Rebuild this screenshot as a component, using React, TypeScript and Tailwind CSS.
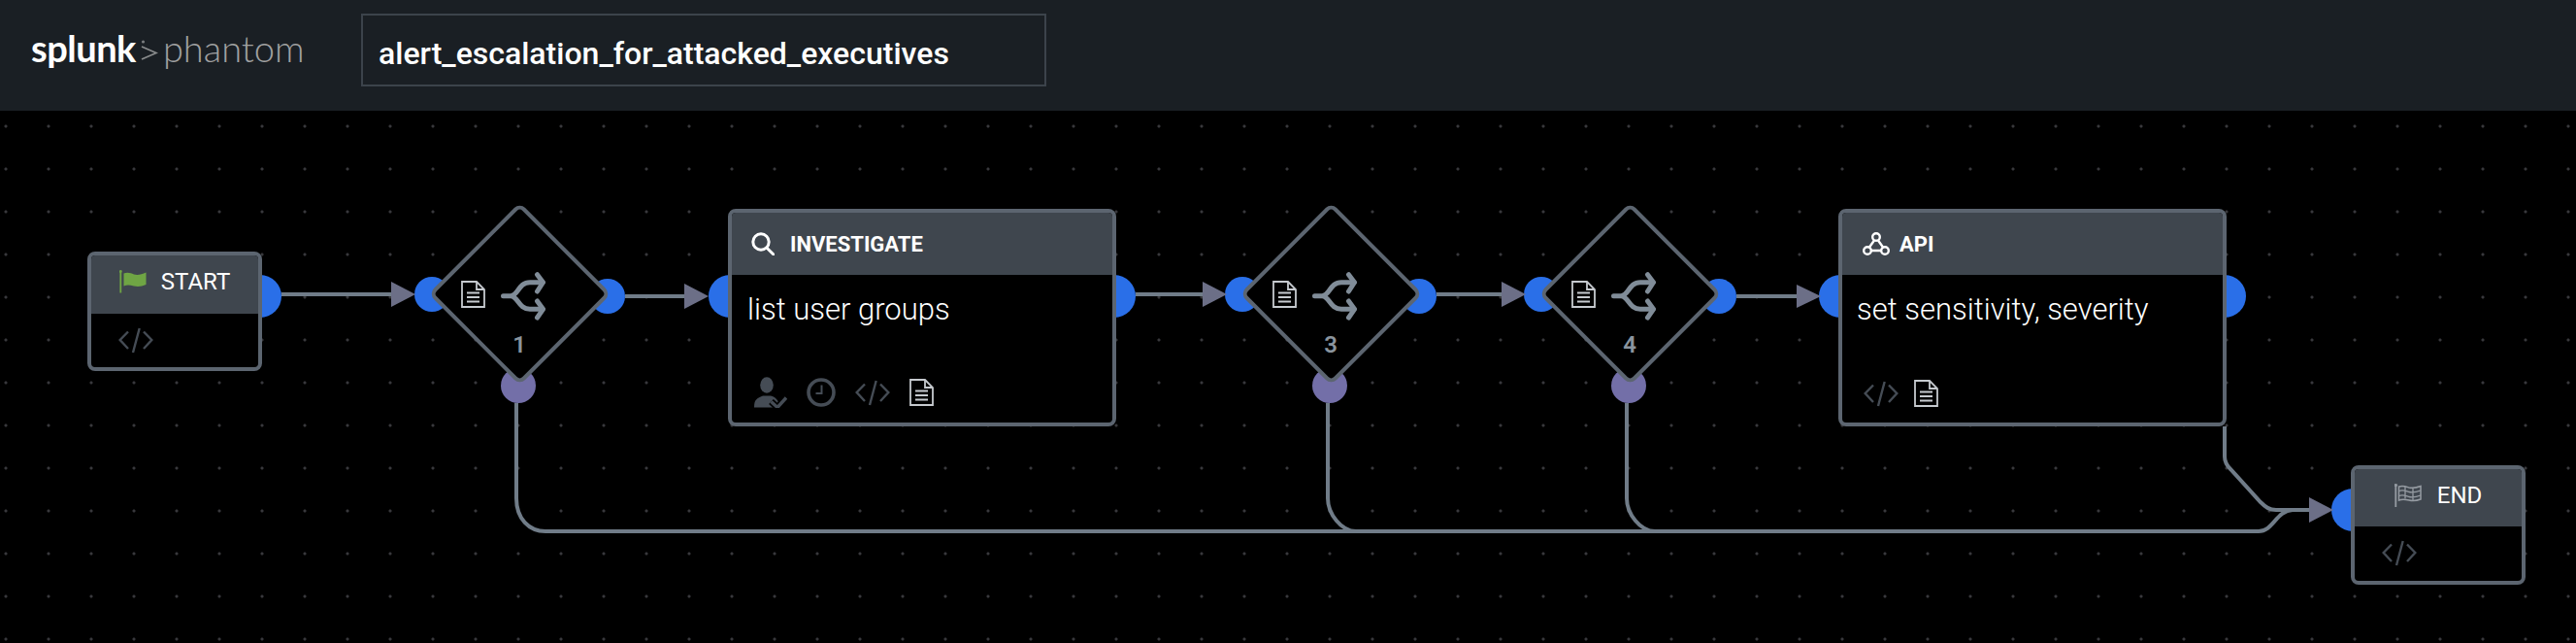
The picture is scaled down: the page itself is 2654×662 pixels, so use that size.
import type { ReactNode } from "react"

const LINE = "#707c88"
const ARROW = "#6c6f87"
const BLUE = "#2a6fe8"
const PURPLE = "#736fa8"

const bluePorts: [number, number, number][] = [
  [268, 191, 22],
  [445, 189, 18],
  [626, 191, 18],
  [752, 191, 22],
  [1148, 191, 22],
  [1280, 189, 18],
  [1462, 191, 18],
  [1588, 189, 18],
  [1771, 191, 18],
  [1896, 191, 22],
  [2292, 191, 22],
  [2424, 411, 22],
]

const purplePorts: [number, number][] = [
  [534, 283],
  [1370, 283],
  [1678, 283],
]

const edges = [
  "M290 189 H404",
  "M644 191 H706",
  "M1170 189 H1240",
  "M1480 189 H1548",
  "M1789 191 H1852",
  "M532 301 V399 C532 420 545 433 562 433 H2327 C2342 433 2345 412 2362 411 H2380",
  "M1368 301 V399 C1368 415 1382 433 1397 433",
  "M1676 301 V399 C1676 415 1690 433 1705 433",
  "M2292 325 V356 C2292 362 2295 366 2298 369 L2329 403 C2334 408 2338 411 2345 411 H2380",
]

const arrows = [
  "403,176 428,189 403,202",
  "705,178 730,191 705,204",
  "1239,176 1264,189 1239,202",
  "1547,176 1572,189 1547,202",
  "1851,179 1876,191 1851,203",
  "2379,398 2404,411 2379,424",
]

function DocIcon() {
  return (
    <svg width="25" height="28" viewBox="0 0 25 28" fill="none" stroke="#c6cacf" strokeWidth="1.8">
      <path d="M1 1 H16 L24 9 V27 H1 Z" />
      <path d="M16 1 V9 H24" />
      <path d="M6 12.5 H19 M6 17 H19 M6 21.5 H19" strokeWidth="2" />
    </svg>
  )
}

function CodeIcon() {
  return (
    <svg width="36" height="27" viewBox="0 0 36 27" fill="none" stroke="#454c55" strokeWidth="2.4">
      <path d="M10 4.5 L1.7 13 L10 22 M26 4.5 L34.3 13 L26 22 M21.7 1 L15 26" />
    </svg>
  )
}

function BranchIcon() {
  return (
    <svg width="46" height="50" viewBox="0 0 46 50" fill="none" stroke="#808c98" strokeWidth="5" strokeLinecap="round" strokeLinejoin="round">
      <path d="M2.5 24.7 H10 C18 24.7 18 10.7 30 10.7 H43 M10 24.7 C18 24.7 18 38.3 30 38.3 H43" />
      <path d="M37.5 2.7 L43.5 10.7 L37.5 20 M37.5 30 L43.5 38.3 L37.5 47" />
    </svg>
  )
}

function SearchIcon() {
  return (
    <svg width="24" height="24" viewBox="0 0 24 24" fill="none" stroke="#ffffff" strokeWidth="3">
      <circle cx="10" cy="10" r="8.2" />
      <path d="M15.8 16 L23 23" strokeLinecap="round" />
    </svg>
  )
}

function ApiIcon() {
  return (
    <svg width="28" height="24" viewBox="0 0 28 24" fill="none" stroke="#ffffff" strokeWidth="2.4">
      <circle cx="14" cy="5" r="3.8" />
      <circle cx="5" cy="19" r="3.8" />
      <circle cx="23" cy="19" r="3.8" />
      <path d="M12 8.5 L7 15.5 M16 8.5 L21 15.5 M8.8 19 H19.2" />
    </svg>
  )
}

function StartFlag() {
  return (
    <svg width="28" height="24" viewBox="0 0 28 24" fill="none">
      <path d="M1.3 1 V23.5" stroke="#6fa544" strokeWidth="1.8" />
      <circle cx="1.3" cy="1.5" r="1.4" fill="#6fa544" />
      <path d="M4.5 3.5 C9 2 12 3.5 15 4.5 C19 5.5 23 4.5 27.5 2.5 V15 C23 17 19 17.5 15 16.5 C11 15.5 8 15 4.5 16.5 Z" fill="#6fa544" />
    </svg>
  )
}

function EndFlag() {
  return (
    <svg width="28" height="24" viewBox="0 0 28 24" fill="none" stroke="#969ca3">
      <path d="M1.3 1 V24" strokeWidth="1.8" />
      <circle cx="1.3" cy="1.5" r="1.3" fill="#969ca3" />
      <path d="M4.5 3 C9 1.5 12 3 15 4 C19 5 23 4 27 2.5 V16 C23 17.5 19 18 15 17 C11 16 8 15.5 4.5 17 Z" strokeWidth="1.5" />
      <path d="M4.5 7.5 C9 6 12 7.5 15 8.5 C19 9.5 23 8.5 27 7 M4.5 12.5 C9 11 12 12.5 15 13.5 C19 14.5 23 13.5 27 12 M11 3 V15.5 M19 5 V17" strokeWidth="1.3" />
    </svg>
  )
}

function UserCheckIcon() {
  return (
    <svg width="35" height="32" viewBox="0 0 35 32" fill="none">
      <ellipse cx="14" cy="8.5" rx="6.8" ry="8.3" fill="#454c55" />
      <path d="M1 31.5 C1 24 3 22 10 19.5 H18 C23 21 26 23 27 31.5 Z" fill="#454c55" />
      <path d="M18.5 25.5 L25 31.5 L34 21.5" stroke="#000000" strokeWidth="7" />
      <path d="M18.5 25.5 L25 31.5 L34 21.5" stroke="#454c55" strokeWidth="3.4" />
    </svg>
  )
}

function ClockIcon() {
  return (
    <svg width="30" height="30" viewBox="0 0 30 30" fill="none" stroke="#454c55">
      <circle cx="15" cy="15" r="13" strokeWidth="3.6" />
      <path d="M15.5 7.5 V16 H9.5" strokeWidth="2" />
    </svg>
  )
}

function Card({ className, head, children }: { className: string; head: ReactNode; children: ReactNode }) {
  return (
    <div className={`absolute flex flex-col overflow-hidden rounded-lg border-4 border-[#5c6570] bg-black ${className}`}>
      {head}
      {children}
    </div>
  )
}

function Diamond({ className, label }: { className: string; label?: string }) {
  return (
    <div className={`absolute flex h-[181px] w-[182px] items-center justify-center ${className}`}>
      <div className="h-[133px] w-[133px] rotate-45 rounded-lg border-4 border-[#5c6570] bg-black" />
      <div className="absolute inset-0 flex flex-col">
        <div className="flex items-center gap-4 pl-[31px] pt-[68px]">
          <div className="mb-[4px]">
            <DocIcon />
          </div>
          <BranchIcon />
        </div>
        <div className="mt-[13px] text-center text-[24px] font-semibold leading-[24px] text-[#8a949e]">{label}</div>
      </div>
    </div>
  )
}

export default function App() {
  return (
    <div className="flex h-[662px] w-[2654px] flex-col overflow-hidden bg-black font-['Roboto',sans-serif]">
      {/* Header */}
      <div className="flex h-[114px] shrink-0 items-start bg-[#1a1f24]">
        <div className="ml-[32px] mt-[27px] flex w-[340px] items-center font-['Lato',sans-serif] text-[38px] leading-[44px]">
          <span className="font-bold tracking-[-0.5px] text-white">splunk</span>
          <svg className="mx-[5px] mt-[6px]" width="18" height="22" viewBox="0 0 18 22" fill="none">
            <circle cx="2.5" cy="2" r="1.6" fill="#7a7d7f" />
            <path d="M1 7 L16 13.5 L1 20" stroke="#8a8c8d" strokeWidth="1.8" />
          </svg>
          <span className="font-light text-[#a0a1a1]">phantom</span>
        </div>
        <div className="mt-[14px] flex h-[75px] w-[706px] items-center border-2 border-[#3c434b] pl-[16px] pt-[6px] text-[32px] font-medium text-white">
          alert_escalation_for_attacked_executives
        </div>
      </div>

      {/* Canvas */}
      <div className="relative flex-1 bg-[radial-gradient(circle,#38383c_1.3px,transparent_1.8px)] bg-[length:44px_44px] bg-[position:-16px_-6px]">
        <svg className="absolute inset-0" width="2654" height="548" viewBox="0 0 2654 548" fill="none">
          {bluePorts.map(([cx, cy, r]) => (
            <circle key={`${cx}-${cy}`} cx={cx} cy={cy} r={r} fill={BLUE} />
          ))}
          {purplePorts.map(([cx, cy]) => (
            <circle key={cx} cx={cx} cy={cy} r={18} fill={PURPLE} />
          ))}
          {edges.map((d) => (
            <path key={d} d={d} stroke={LINE} strokeWidth="4" />
          ))}
          {arrows.map((p) => (
            <polygon key={p} points={p} fill={ARROW} />
          ))}
        </svg>

        <Card
          className="left-[90px] top-[145px] h-[123px] w-[180px]"
          head={
            <div className="flex h-[60px] items-center justify-center gap-[15px] bg-[#3f464e] pb-[6px] text-[24px] text-white">
              <StartFlag />
              START
            </div>
          }
        >
          <div className="pl-[28px] pt-[14px]">
            <CodeIcon />
          </div>
        </Card>

        <Diamond className="left-[444px] top-[98px]" label="1" />

        <Card
          className="left-[750px] top-[101px] h-[224px] w-[400px]"
          head={
            <div className="flex h-[64px] items-center gap-4 bg-[#3f464e] pl-5 text-[22px] font-bold text-white">
              <SearchIcon />
              INVESTIGATE
            </div>
          }
        >
          <div className="flex flex-1 flex-col justify-between pb-[15px]">
            <div className="pl-[16px] pt-[16px] text-[31px] font-light leading-[40px] text-white">list user groups</div>
            <div className="flex items-center gap-[20px] pl-[22px]">
              <UserCheckIcon />
              <ClockIcon />
              <CodeIcon />
              <DocIcon />
            </div>
          </div>
        </Card>

        <Diamond className="left-[1280px] top-[98px]" label="3" />
        <Diamond className="left-[1588px] top-[98px]" label="4" />

        <Card
          className="left-[1894px] top-[101px] h-[224px] w-[400px]"
          head={
            <div className="flex h-[64px] items-center gap-[10px] bg-[#3f464e] pl-[21px] text-[22px] font-bold text-white">
              <ApiIcon />
              API
            </div>
          }
        >
          <div className="flex flex-1 flex-col justify-between pb-[16px]">
            <div className="pl-[15px] pt-[16px] text-[31px] font-light leading-[40px] text-white">set sensitivity, severity</div>
            <div className="flex items-center gap-4 pl-[22px]">
              <CodeIcon />
              <DocIcon />
            </div>
          </div>
        </Card>

        <Card
          className="left-[2422px] top-[365px] h-[123px] w-[180px]"
          head={
            <div className="flex h-[59px] items-center justify-center gap-[16px] bg-[#3f464e] pb-[5px] text-[24px] text-white">
              <EndFlag />
              END
            </div>
          }
        >
          <div className="pl-[28px] pt-[14px]">
            <CodeIcon />
          </div>
        </Card>
      </div>
    </div>
  )
}
